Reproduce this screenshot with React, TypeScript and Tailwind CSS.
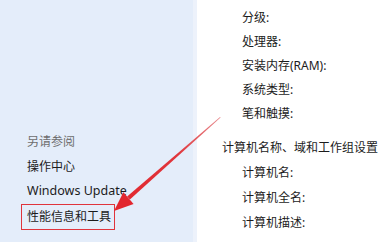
const font = { fontFamily: '"Noto Sans", "Noto Sans CJK SC", sans-serif' }

const specs = ['分级:', '处理器:', '安装内存(RAM):', '系统类型:', '笔和触摸:']
const names = ['计算机名:', '计算机全名:', '计算机描述:']

export default function App() {
  return (
    <div
      className="relative flex h-[242px] w-[383px] overflow-hidden bg-white text-[12px] text-[#1c1c1c]"
      style={font}
    >
      {/* left task pane */}
      <div className="flex w-[197px] shrink-0 flex-col border-r-4 border-[#edf2fb] bg-[#e4edfa] pt-[129px]">
        <div className="flex h-[25px] items-center pl-[27px] text-[#6e6e6e]">另请参阅</div>
        <div className="flex h-[25px] items-center pl-[27px]">操作中心</div>
        <div className="flex h-[25px] items-center pl-[27px] text-[12.5px]">Windows Update</div>
        <div className="ml-[21px] mt-[0px] flex h-[26px] w-[94px] items-center border border-[#e0343c] pl-[5px]">
          性能信息和工具
        </div>
      </div>

      {/* system details */}
      <div className="flex flex-col whitespace-nowrap pt-[6px]">
        {specs.map((s) => (
          <div key={s} className="flex h-[24px] items-center pl-[45px]">
            {s}
          </div>
        ))}
        <div className="mt-[10px] flex h-[24px] items-center pl-[25px]">计算机名称、域和工作组设置</div>
        {names.map((s) => (
          <div key={s} className="flex h-[25px] items-center pl-[45px]">
            {s}
          </div>
        ))}
      </div>

      {/* red arrow */}
      <svg className="pointer-events-none absolute left-0 top-0" width="383" height="242" viewBox="0 0 383 242">
        <defs>
          <linearGradient id="arr" x1="220" y1="117" x2="115" y2="210" gradientUnits="userSpaceOnUse">
            <stop offset="0" stopColor="#e88a8e" />
            <stop offset="0.4" stopColor="#e0363c" />
            <stop offset="1" stopColor="#e2262e" />
          </linearGradient>
        </defs>
        <polygon points="220,117 220.6,117.5 129.9,199.4 127.1,196.6" fill="url(#arr)" />
        <polygon points="114,211 133.6,204 123.4,192.3" fill="#e2262e" />
      </svg>
    </div>
  )
}
